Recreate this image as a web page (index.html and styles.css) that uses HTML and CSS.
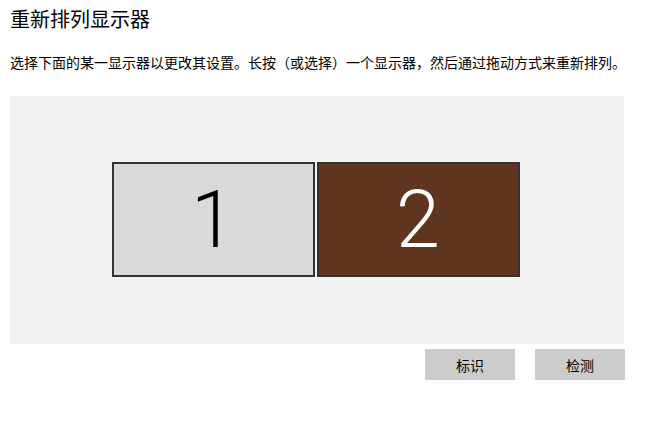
FILE: index.html
```html
<!DOCTYPE html>
<html lang="zh-CN">
<head>
    <meta charset="UTF-8">
    <meta name="viewport" content="width=device-width, initial-scale=1.0">
    <title>重新排列显示器</title>

    <link rel="stylesheet" href="styles.css">
</head>
<body>

    <div class="page">
        <h1 class="title">重新排列显示器</h1>
        <p class="desc">选择下面的某一显示器以更改其设置。长按（或选择）一个显示器，然后通过拖动方式来重新排列。</p>

        <!-- Monitor arrangement area -->
        <div class="arrange">
            <div class="monitor">1</div>
            <div class="monitor selected">2</div>
        </div>

        <div class="actions">
            <button type="button">标识</button>
            <button type="button">检测</button>
        </div>
    </div>

</body>
</html>
```

FILE: styles.css
```css
body {
    font-family: "Noto Sans CJK SC", sans-serif;
    margin: 0;
    padding: 0;
    background-color: #fff;
    color: #000;
}

.page {
    width: 615px;
    padding: 5px 0 0 10px;
}

.title {
    font-size: 20px;
    font-weight: normal;
    line-height: 28px;
    margin: 0;
}

.desc {
    font-size: 14px;
    line-height: 20px;
    margin: 19px 0 0 0;
    white-space: nowrap;
}

/* Grey box with the monitors */
.arrange {
    margin: 24px 1px 0 0;
    height: 248px;
    padding-right: 3px;
    padding-bottom: 1px;
    box-sizing: border-box;
    background-color: #f2f2f2;
    display: flex;
    align-items: center;
    justify-content: center;
    gap: 2px;
}

.monitor {
    width: 199px;
    height: 111px;
    border: 2px solid #333;
    background-color: #d9d9d9;
    display: flex;
    align-items: center;
    justify-content: center;
    font-family: "Roboto", sans-serif;
    font-weight: 300;
    font-size: 79px;
    color: #000;
}

.monitor.selected {
    background-color: #5f3520;
    color: #fff;
}

.actions {
    margin-top: 5px;
    display: flex;
    justify-content: flex-end;
    gap: 20px;
}

button {
    width: 90px;
    height: 31px;
    background-color: #ccc;
    border: none;
    font-family: "Noto Sans CJK SC", sans-serif;
    font-size: 14px;
    color: #000;
    padding: 0;
}
```
